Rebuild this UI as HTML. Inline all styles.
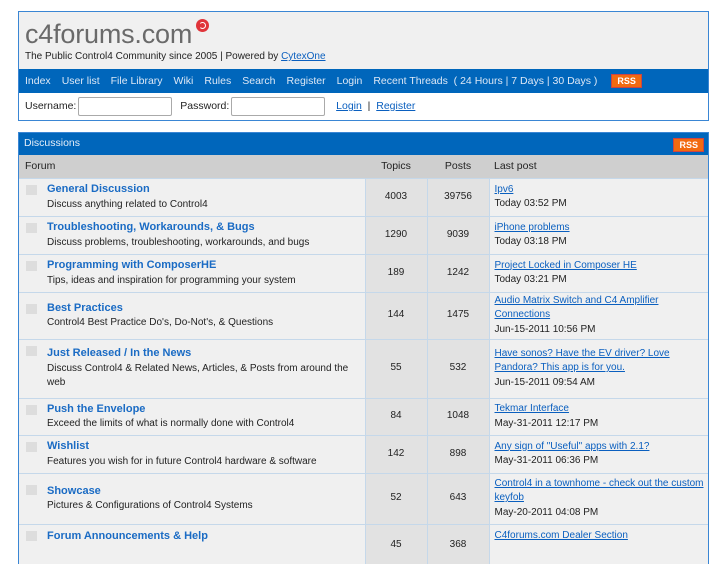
<!DOCTYPE html>
<html><head><meta charset="utf-8"><style>
*{box-sizing:border-box;margin:0;padding:0}
body{width:727px;height:545px;overflow:hidden;background:#fff;font-family:"Liberation Sans",sans-serif;font-size:10px;color:#222;position:relative}
a{color:#0a5fbf}
.hdr{position:absolute;left:18px;top:11px;width:691px;height:110px;border:1px solid #3a86d4;background:#f0f0f0}
.logo{position:absolute;left:6px;top:7px;font-size:27px;color:#6a6a6a;letter-spacing:-0.2px;font-weight:300}
.logo i{position:absolute;right:-17px;top:0px;width:13px;height:13px;border-radius:50%;background:#e0343a}
.logo i:after{content:"";position:absolute;left:3px;top:3px;width:5px;height:5px;border:1.5px solid #fff;border-radius:50%;border-left-color:transparent}
.tag{position:absolute;left:6px;top:39px;font-size:10px;color:#222}
.nav{position:absolute;left:0;top:57px;width:689px;height:24px;background:#0066bb;color:#dde8f6;font-size:10.5px;line-height:24px;padding-left:6px;white-space:nowrap}
.nav span{margin-right:11px}
.rss{display:inline-block;background:#f26a10;color:#fff;font-weight:bold;font-size:9px;line-height:12px;padding:0 5px;border:1px solid #c44;vertical-align:middle}
.login{position:absolute;left:0;top:81px;width:689px;height:27px;background:#fff;line-height:27px;padding-left:6px;font-size:10.5px}
.inp{display:inline-block;width:94px;height:19px;border:1px solid #aaa;border-radius:2px;vertical-align:middle;margin:0 5px 0 2px}
.box{position:absolute;left:18px;top:132px;width:691px;border:1px solid #3a86d4;border-bottom:none}
.bh{height:22px;background:#0066bb;color:#e6eef8;line-height:21px;padding-left:5px;position:relative;font-size:10.5px}
.bh .rss{position:absolute;right:4px;top:5px}
table{border-collapse:collapse;width:689px;table-layout:fixed}
th{background:#cfcfcf;height:23px;font-weight:normal;font-size:10.5px;text-align:center}
td{border-top:1px solid #c5d8ea;vertical-align:middle;line-height:14.5px;background:#f0f0f0}
td.n{background:#e2e2e2;text-align:center;border-left:1px solid #c5d8ea}
td.l{padding-left:5px;border-left:1px solid #c5d8ea}
td.f{padding-left:28px;position:relative}
td.f b{font-size:11px;color:#1a6bc4}
td.f i{position:absolute;left:7px;top:6px;width:11px;height:10px;background:#ddd}
</style></head><body>
<div class="hdr">
<div class="logo">c4forums.com<i></i></div>
<div class="tag">The Public Control4 Community since 2005 | Powered by <a href="#">CytexOne</a></div>
<div class="nav"><span>Index</span><span>User list</span><span>File Library</span><span>Wiki</span><span>Rules</span><span>Search</span><span>Register</span><span>Login</span><span>Recent Threads &nbsp;( 24 Hours | 7 Days | 30 Days )</span> <span class="rss">RSS</span></div>
<div class="login">Username:<span class="inp"></span> Password:<span class="inp"></span> &nbsp;<a href="#">Login</a> &nbsp;| &nbsp;<a href="#">Register</a></div>
</div>
<div class="box">
<div class="bh">Discussions<span class="rss">RSS</span></div>
<table>
<colgroup><col style="width:346px"><col style="width:62px"><col style="width:62px"><col></colgroup>
<tr><th style="text-align:left;padding-left:6px">Forum</th><th>Topics</th><th>Posts</th><th style="text-align:left;padding-left:5px">Last post</th></tr>
<tr style="height:38px"><td class="f"><i></i><b>General Discussion</b><br>Discuss anything related to Control4</td><td class="n">4003</td><td class="n">39756</td><td class="l"><a href="#">Ipv6</a><br>Today 03:52 PM</td></tr>
<tr style="height:38px"><td class="f"><i></i><b>Troubleshooting, Workarounds, &amp; Bugs</b><br>Discuss problems, troubleshooting, workarounds, and bugs</td><td class="n">1290</td><td class="n">9039</td><td class="l"><a href="#">iPhone problems</a><br>Today 03:18 PM</td></tr>
<tr style="height:38px"><td class="f"><i></i><b>Programming with ComposerHE</b><br>Tips, ideas and inspiration for programming your system</td><td class="n">189</td><td class="n">1242</td><td class="l"><a href="#">Project Locked in Composer HE</a><br>Today 03:21 PM</td></tr>
<tr style="height:47px"><td class="f"><i style="top:11px"></i><b>Best Practices</b><br>Control4 Best Practice Do's, Do-Not's, &amp; Questions</td><td class="n">144</td><td class="n">1475</td><td class="l"><a href="#">Audio Matrix Switch and C4 Amplifier Connections</a><br>Jun-15-2011 10:56 PM</td></tr>
<tr style="height:59px"><td class="f"><i></i><b>Just Released / In the News</b><br>Discuss Control4 &amp; Related News, Articles, &amp; Posts from around the web</td><td class="n">55</td><td class="n">532</td><td class="l"><a href="#">Have sonos? Have the EV driver? Love Pandora? This app is for you.</a><br>Jun-15-2011 09:54 AM</td></tr>
<tr style="height:37px"><td class="f"><i></i><b>Push the Envelope</b><br>Exceed the limits of what is normally done with Control4</td><td class="n">84</td><td class="n">1048</td><td class="l"><a href="#">Tekmar Interface</a><br>May-31-2011 12:17 PM</td></tr>
<tr style="height:38px"><td class="f"><i></i><b>Wishlist</b><br>Features you wish for in future Control4 hardware &amp; software</td><td class="n">142</td><td class="n">898</td><td class="l"><a href="#">Any sign of "Useful" apps with 2.1?</a><br>May-31-2011 06:36 PM</td></tr>
<tr style="height:51px"><td class="f"><i style="top:11px"></i><b>Showcase</b><br>Pictures &amp; Configurations of Control4 Systems</td><td class="n">52</td><td class="n">643</td><td class="l"><a href="#">Control4 in a townhome - check out the custom keyfob</a><br>May-20-2011 04:08 PM</td></tr>
<tr style="height:40px"><td class="f" style="vertical-align:top;padding-top:4px"><i></i><b>Forum Announcements &amp; Help</b></td><td class="n" style="vertical-align:top;padding-top:13px">45</td><td class="n" style="vertical-align:top;padding-top:13px">368</td><td class="l" style="vertical-align:top;padding-top:4px"><a href="#">C4forums.com Dealer Section</a></td></tr>
</table>
</div>
</body></html>
